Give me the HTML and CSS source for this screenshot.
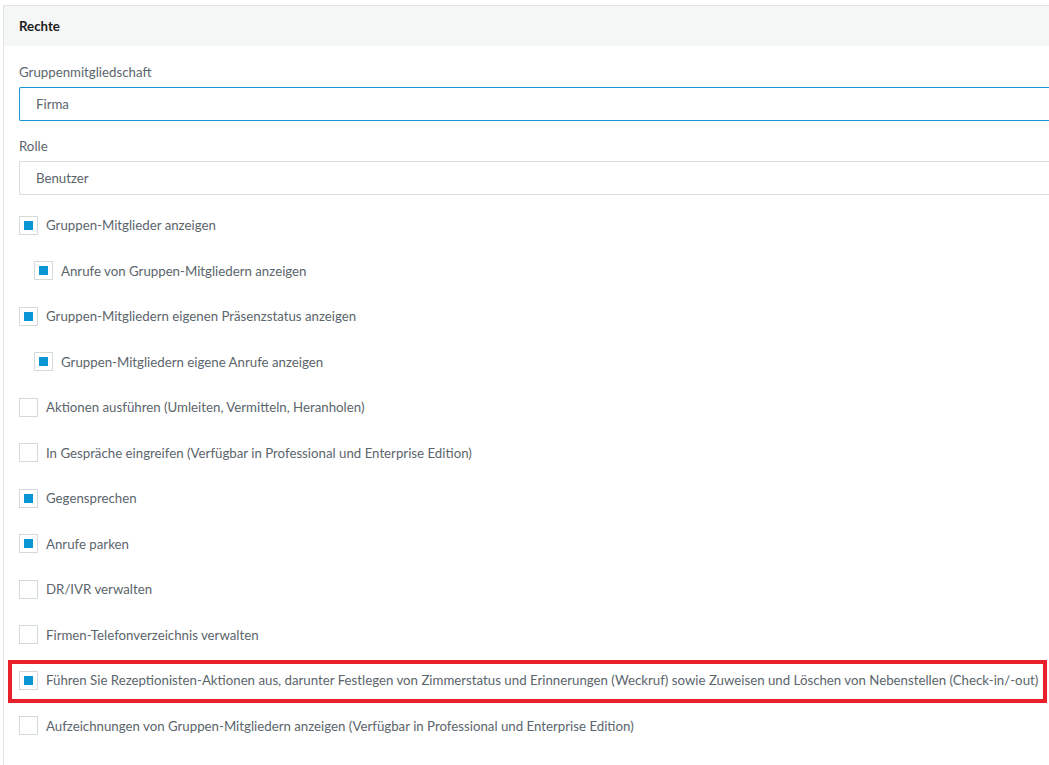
FILE: index.html
```html
<!DOCTYPE html>
<html>
<head>
    <title>Rechte</title>
    <link rel="stylesheet" href="styles.css">
</head>
<body>
    <div class="panel">
        <div class="panel-heading">Rechte</div>
        <div class="panel-body">
            <div class="form-group">
                <label>Gruppenmitgliedschaft</label>
                <div class="select active">Firma</div>
            </div>
            <div class="form-group">
                <label>Rolle</label>
                <div class="select">Benutzer</div>
            </div>

            <div class="checks">
                <div class="check"><span class="box on"></span>Gruppen-Mitglieder anzeigen</div>
                <div class="check sub"><span class="box on"></span>Anrufe von Gruppen-Mitgliedern anzeigen</div>
                <div class="check"><span class="box on"></span>Gruppen-Mitgliedern eigenen Präsenzstatus anzeigen</div>
                <div class="check sub"><span class="box on"></span>Gruppen-Mitgliedern eigene Anrufe anzeigen</div>
                <div class="check"><span class="box"></span>Aktionen ausführen (Umleiten, Vermitteln, Heranholen)</div>
                <div class="check"><span class="box"></span>In Gespräche eingreifen (Verfügbar in Professional und Enterprise Edition)</div>
                <div class="check"><span class="box on"></span>Gegensprechen</div>
                <div class="check"><span class="box on"></span>Anrufe parken</div>
                <div class="check"><span class="box"></span>DR/IVR verwalten</div>
                <div class="check"><span class="box"></span>Firmen-Telefonverzeichnis verwalten</div>
                <div class="check highlight"><span class="box on"></span>Führen Sie Rezeptionisten-Aktionen aus, darunter Festlegen von Zimmerstatus und Erinnerungen (Weckruf) sowie Zuweisen und Löschen von Nebenstellen (Check-in/-out)</div>
                <div class="check"><span class="box"></span>Aufzeichnungen von Gruppen-Mitgliedern anzeigen (Verfügbar in Professional und Enterprise Edition)</div>
            </div>
        </div>
    </div>
</body>
</html>
```

FILE: styles.css
```css
html, body {
    margin: 0;
    padding: 0;
    background-color: #fff;
    overflow: hidden;
}
body {
    font-family: Lato, "Liberation Sans", sans-serif;
    font-size: 13.25px;
    color: #5b656c;
}
.panel {
    box-sizing: border-box;
    margin: 5px 0 0 3px;
    width: 1046px;
    height: 760px;
    border: 1px solid #e0e4e6;
    border-right: none;
    border-bottom: none;
    overflow: hidden;
}
.panel-heading {
    height: 40px;
    line-height: 40px;
    padding-left: 15px;
    background-color: #f5f6f6;
    font-weight: bold;
    color: #1c1c1c;
}
.panel-body {
    padding: 16px 0 0 15px;
}
.form-group {
    margin-bottom: 15px;
}
label {
    display: block;
    height: 20px;
    line-height: 20px;
    margin-bottom: 5px;
}
.select {
    height: 32px;
    line-height: 32px;
    padding-left: 16px;
    border: 1px solid #d6dbde;
    border-right: none;
    border-radius: 2px 0 0 2px;
}
.select.active {
    border-color: #1a96d4;
}
.checks {
    margin-top: -7.75px;
}
.check {
    position: relative;
    display: flex;
    align-items: center;
    height: 45.5px;
    white-space: nowrap;
}
.check.sub {
    padding-left: 15px;
}
.box {
    position: relative;
    flex: none;
    width: 17px;
    height: 17px;
    border: 1px solid #d3dadd;
    margin-right: 8px;
}
.box.on::after {
    content: "";
    position: absolute;
    left: 4px;
    top: 4px;
    width: 9px;
    height: 9px;
    background-color: #0a96d4;
}
.highlight::after {
    content: "";
    position: absolute;
    left: -11px;
    top: 2.75px;
    width: 1031px;
    height: 35px;
    border: 4px solid #e8202a;
}
```
